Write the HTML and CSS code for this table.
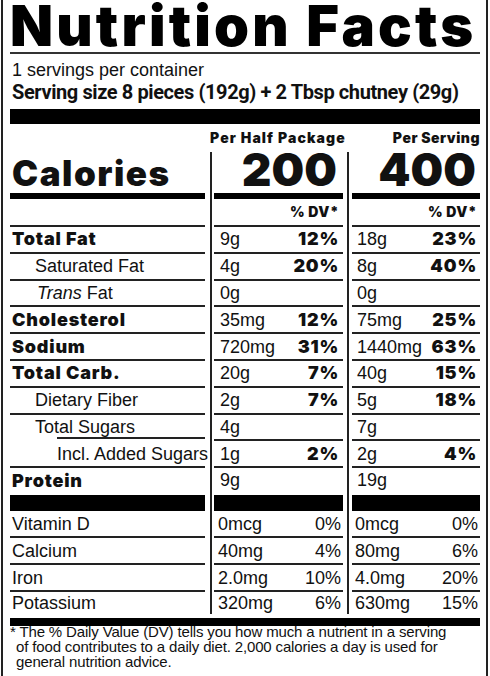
FILE: index.html
```html
<!DOCTYPE html>
<html lang="en">
<head>
  <meta charset="UTF-8">
  <meta name="viewport" content="width=device-width, initial-scale=1.0">
  <title>Nutrition Facts</title>
  <link rel="stylesheet" href="styles.css">
</head>
<body>
  <div class="label">
    <h1 class="title">Nutrition Facts</h1>
    <div class="servings">1 servings per container</div>
    <div class="serving-size">Serving size 8 pieces (192g) + 2 Tbsp chutney (29g)</div>
    <div class="bar"></div>

    <div class="heads">
      <div class="head-name"></div>
      <div class="head-half">Per Half Package</div>
      <div class="head-serv">Per Serving</div>
    </div>

    <div class="table">
      <div class="col names">
        <div class="cell cal"><span class="cal-word">Calories</span></div>
        <div class="cell dv"></div>
        <div class="cell strong">Total Fat</div>
        <div class="cell sub">Saturated Fat</div>
        <div class="cell sub trans"><i>Trans</i>&nbsp;Fat</div>
        <div class="cell strong">Cholesterol</div>
        <div class="cell strong">Sodium</div>
        <div class="cell strong">Total Carb.</div>
        <div class="cell sub">Dietary Fiber</div>
        <div class="cell sub sugars">Total Sugars</div>
        <div class="cell added">Incl. Added Sugars</div>
        <div class="cell strong protein">Protein</div>
        <div class="cell min">Vitamin D</div>
        <div class="cell min">Calcium</div>
        <div class="cell min">Iron</div>
        <div class="cell min last">Potassium</div>
      </div>

      <div class="col half">
        <div class="cell cal"><span class="cal-num">200</span></div>
        <div class="cell dv"><b>% DV*</b></div>
        <div class="cell"><span>9g</span><b>12%</b></div>
        <div class="cell"><span>4g</span><b>20%</b></div>
        <div class="cell"><span>0g</span></div>
        <div class="cell"><span>35mg</span><b>12%</b></div>
        <div class="cell"><span>720mg</span><b>31%</b></div>
        <div class="cell"><span>20g</span><b>7%</b></div>
        <div class="cell"><span>2g</span><b>7%</b></div>
        <div class="cell"><span>4g</span></div>
        <div class="cell"><span>1g</span><b>2%</b></div>
        <div class="cell protein"><span>9g</span></div>
        <div class="cell min"><span>0mcg</span><span>0%</span></div>
        <div class="cell min"><span>40mg</span><span>4%</span></div>
        <div class="cell min"><span>2.0mg</span><span>10%</span></div>
        <div class="cell min last"><span>320mg</span><span>6%</span></div>
      </div>

      <div class="col serv">
        <div class="cell cal"><span class="cal-num">400</span></div>
        <div class="cell dv"><b>% DV*</b></div>
        <div class="cell"><span>18g</span><b>23%</b></div>
        <div class="cell"><span>8g</span><b>40%</b></div>
        <div class="cell"><span>0g</span></div>
        <div class="cell"><span>75mg</span><b>25%</b></div>
        <div class="cell"><span>1440mg</span><b>63%</b></div>
        <div class="cell"><span>40g</span><b>15%</b></div>
        <div class="cell"><span>5g</span><b>18%</b></div>
        <div class="cell"><span>7g</span></div>
        <div class="cell"><span>2g</span><b>4%</b></div>
        <div class="cell protein"><span>19g</span></div>
        <div class="cell min"><span>0mcg</span><span>0%</span></div>
        <div class="cell min"><span>80mg</span><span>6%</span></div>
        <div class="cell min"><span>4.0mg</span><span>20%</span></div>
        <div class="cell min last"><span>630mg</span><span>15%</span></div>
      </div>
    </div>

    <div class="bar-bottom"></div>
    <p class="note">* The % Daily Value (DV) tells you how much a nutrient in a serving of food contributes to a daily diet. 2,000 calories a day is used for general nutrition advice.</p>
  </div>
</body>
</html>
```

FILE: styles.css
```css
* {
  box-sizing: border-box;
}

body {
  margin: 0;
  background: #fff;
  color: #111;
  font-family: "Liberation Sans", Arial, sans-serif;
}

.label {
  width: 487px;
  height: 676px;
  margin-left: 1px;
  padding: 0 6px 0 7px;
  border-left: 2px solid #222;
  border-right: 2px solid #222;
  overflow: hidden;
}

.title {
  margin: 0;
  height: 54px;
  font-family: Inter, Roboto, sans-serif;
  font-weight: 900;
  font-size: 56px;
  line-height: 52px;
  letter-spacing: 3.2px;
  color: #000;
  white-space: nowrap;
  border-bottom: 2px solid #333;
}

.servings {
  margin-top: 4px;
  padding-left: 2px;
  font-size: 18px;
  line-height: 24px;
}

.serving-size {
  padding-left: 2px;
  font-family: Roboto, sans-serif;
  font-weight: bold;
  font-size: 20px;
  line-height: 20px;
  letter-spacing: -0.4px;
  white-space: nowrap;
}

.bar {
  height: 15px;
  margin-top: 7px;
  background: #000;
}

.heads {
  display: flex;
  height: 28px;
  font-family: Inter, Roboto, sans-serif;
  font-weight: 900;
  font-size: 14px;
  line-height: 28px;
  letter-spacing: 0.5px;
  white-space: nowrap;
}

.head-name {
  width: 200px;
}

.head-half {
  width: 137px;
  padding-right: 4px;
  text-align: right;
  letter-spacing: 1.1px;
}

.head-serv {
  width: 133px;
  text-align: right;
}

.table {
  display: flex;
}

.col {
  display: flex;
  flex-direction: column;
}

.names {
  width: 200px;
  padding-right: 5px;
}

.half {
  width: 137px;
  padding: 0 4px 0 2px;
  border-left: 2px solid #222;
}

.serv {
  width: 133px;
  padding-left: 3px;
  border-left: 2px solid #222;
}

.cell {
  display: flex;
  align-items: center;
  justify-content: space-between;
  height: 26.8px;
  font-size: 18px;
  line-height: 24px;
  white-space: nowrap;
  border-bottom: 2px solid #222;
}

.half .cell {
  padding: 0 4px 0 6px;
}

.serv .cell {
  padding: 0 3px 0 5px;
}

.cell b,
.strong {
  font-family: Inter, Roboto, sans-serif;
  font-weight: 900;
  letter-spacing: 0.8px;
}

.names .cell {
  padding-left: 2px;
}

.names .sub {
  padding-left: 25px;
}

.names .trans {
  justify-content: flex-start;
  padding-left: 27px;
}

.names .sugars {
  border-bottom-color: transparent;
  background: linear-gradient(#222, #222) no-repeat right bottom / calc(100% - 47px) 2px;
}

.names .added {
  padding-left: 47px;
}

.cal {
  height: 47px;
  align-items: flex-end;
  border-bottom-width: 6px;
  border-bottom-color: #000;
}

.names .cal {
  padding-bottom: 2px;
}

.cal-word {
  font-family: Inter, Roboto, sans-serif;
  font-weight: 900;
  font-size: 35px;
  line-height: 35px;
  letter-spacing: 1.5px;
}

.half .cal,
.serv .cal {
  justify-content: flex-end;
  padding-bottom: 1px;
}

.half .cal {
  padding-right: 6px;
}

.serv .cal {
  padding-right: 4px;
}

.cal-num {
  font-family: Inter, Roboto, sans-serif;
  font-weight: 900;
  font-size: 46px;
  line-height: 46px;
}

.dv {
  height: 28px;
  justify-content: flex-end;
}

.dv b {
  font-size: 14px;
  letter-spacing: 0.5px;
}

.protein {
  height: 43px;
  align-items: flex-start;
  padding-top: 1px;
  border-bottom-width: 16px;
  border-bottom-color: #000;
}

.min {
  height: 27px;
}

.names .min {
  padding-left: 2px;
}

.half .min {
  padding: 0 2px 0 4px;
}

.serv .min {
  padding: 0 2px 0 3px;
}

.last {
  height: 22px;
  border-bottom: 0;
}

.bar-bottom {
  height: 8px;
  margin-top: 4px;
  background: #000;
}

.note {
  margin: -2px 0 0;
  padding-left: 6px;
  text-indent: -6px;
  width: 452px;
  font-size: 15px;
  line-height: 15px;
  letter-spacing: -0.15px;
}
```
